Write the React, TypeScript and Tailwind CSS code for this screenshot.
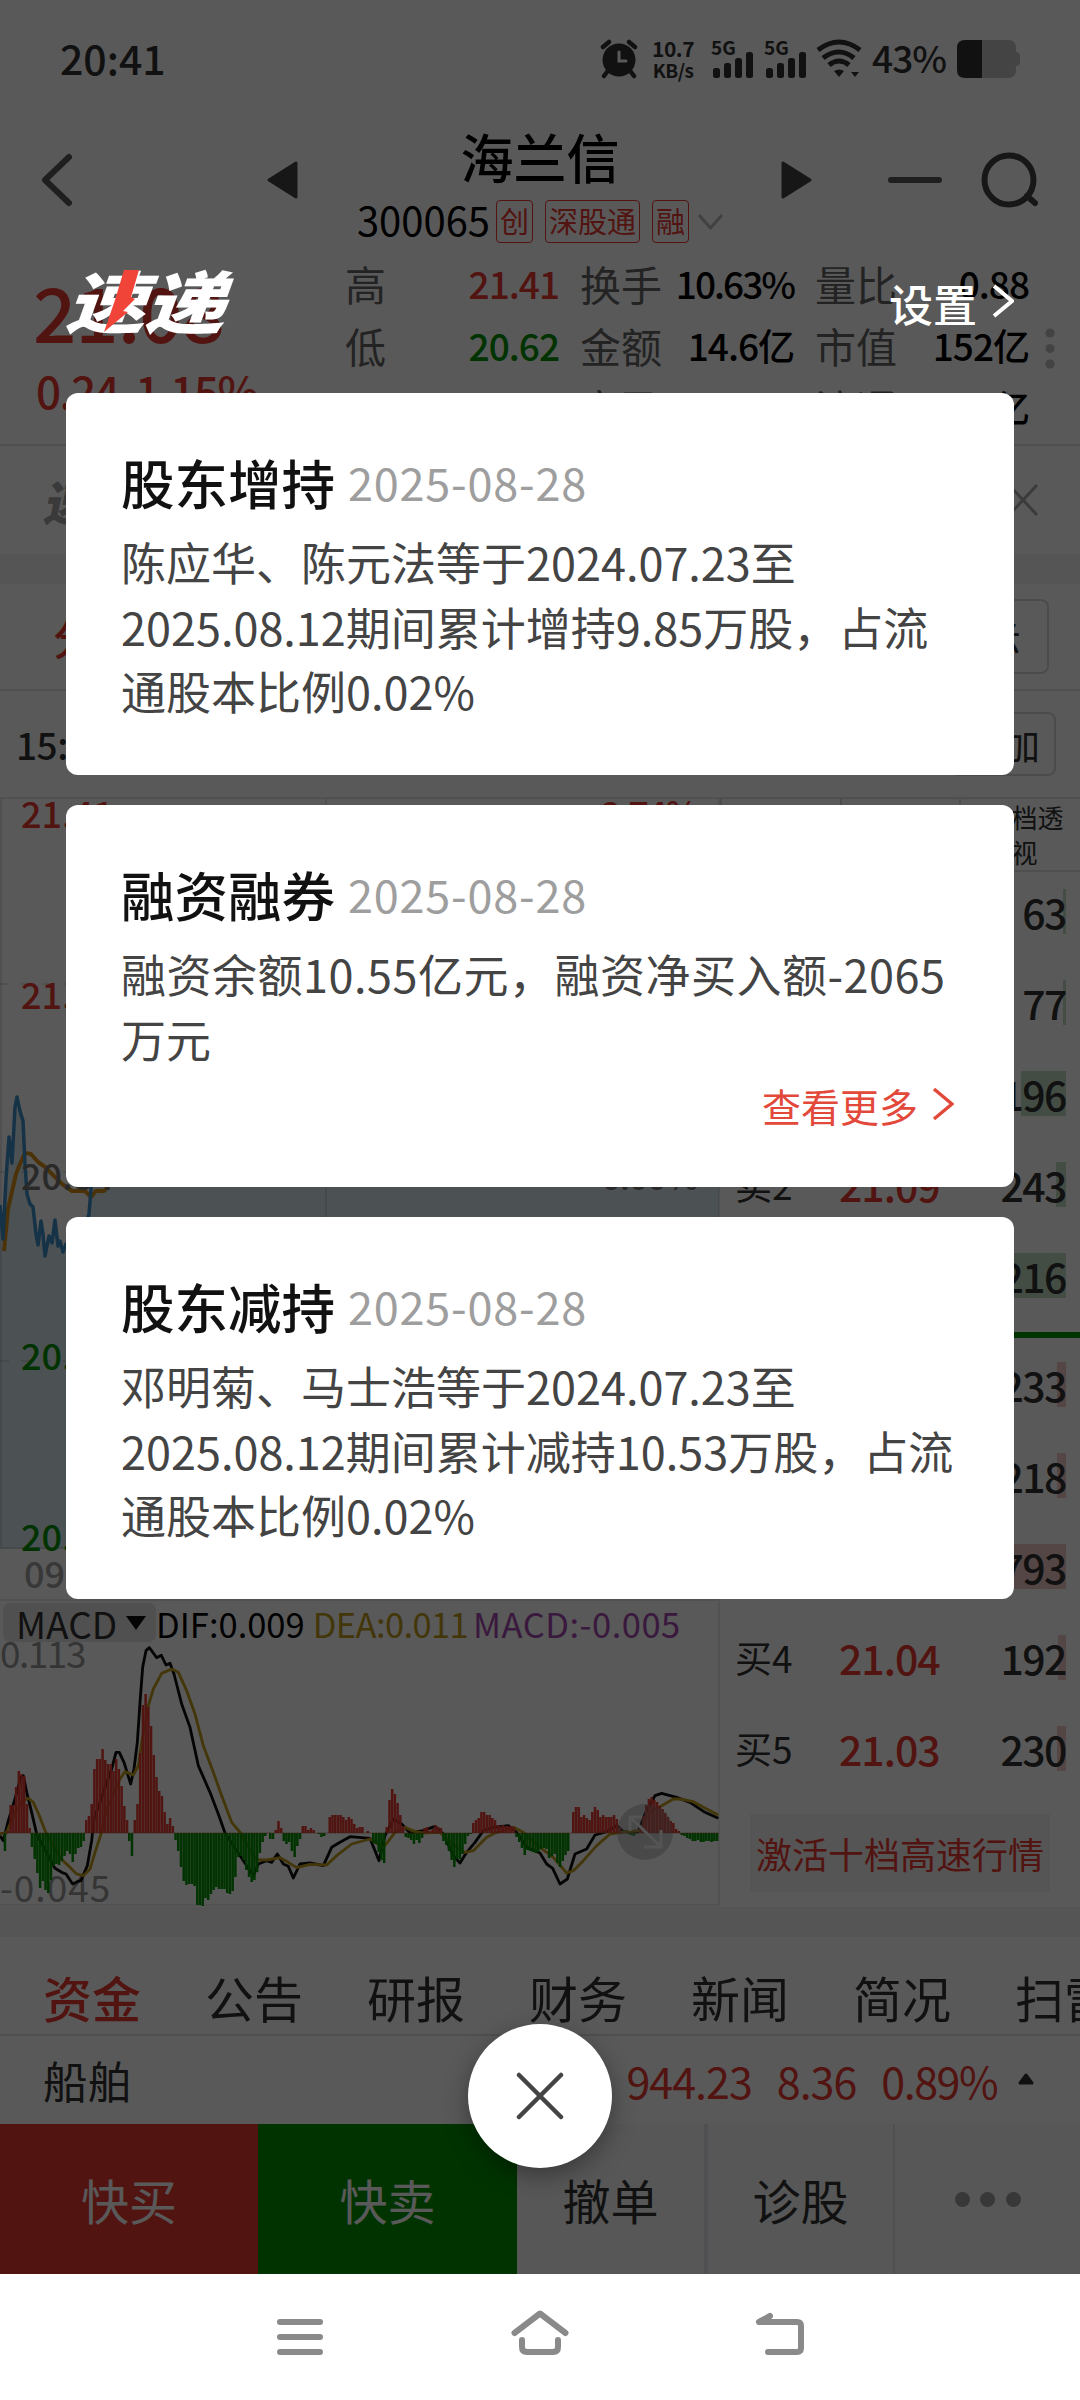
import { clsx } from "clsx";

const TAGS = ["创", "深股通", "融"];

const STATS = [
  [
    { label: "高", value: "21.41", color: "text-[#eb3a33]" },
    { label: "低", value: "20.62", color: "text-[#009200]" },
    { label: "开", value: "20.84", color: "text-black" },
  ],
  [
    { label: "换手", value: "10.63%", color: "text-black" },
    { label: "金额", value: "14.6亿", color: "text-black" },
    { label: "市盈", value: "--", color: "text-black" },
  ],
  [
    { label: "量比", value: "0.88", color: "text-black" },
    { label: "市值", value: "152亿", color: "text-black" },
    { label: "流通", value: "136亿", color: "text-black" },
  ],
];

const ASKS = [
  { label: "卖5", price: "21.12", volume: "63", bar: 3 },
  { label: "卖4", price: "21.11", volume: "77", bar: 3 },
  { label: "卖3", price: "21.10", volume: "196", bar: 45 },
  { label: "卖2", price: "21.09", volume: "243", bar: 10 },
  { label: "卖1", price: "21.08", volume: "216", bar: 76 },
];

const BIDS = [
  { label: "买1", price: "21.07", volume: "233", bar: 9 },
  { label: "买2", price: "21.06", volume: "218", bar: 9 },
  { label: "买3", price: "21.05", volume: "793", bar: 120 },
  { label: "买4", price: "21.04", volume: "192", bar: 8 },
  { label: "买5", price: "21.03", volume: "230", bar: 9 },
];

const TABS = ["资金", "公告", "研报", "财务", "新闻", "简况", "扫雷"];

const NEWS = [
  {
    title: "股东增持",
    date: "2025-08-28",
    lines: ["陈应华、陈元法等于2024.07.23至", "2025.08.12期间累计增持9.85万股，占流", "通股本比例0.02%"],
    more: false,
  },
  {
    title: "融资融券",
    date: "2025-08-28",
    lines: ["融资余额10.55亿元，融资净买入额-2065", "万元"],
    more: true,
  },
  {
    title: "股东减持",
    date: "2025-08-28",
    lines: ["邓明菊、马士浩等于2024.07.23至", "2025.08.12期间累计减持10.53万股，占流", "通股本比例0.02%"],
    more: false,
  },
];

// MACD histogram: [start x, bar heights], positive goes up from the zero line
const MACD_RUNS: [number, number[]][] = [
  [3.7, [-18]],
  [6.7, [2, 28, 28, 46, 62, 59, 57, 29, 5]],
  [30.7, [-14, -26, -40, -55, -48, -57, -60, -47, -33, -31, -32, -28, -23, -18, -21, -29, -21, -15, -14, -8]],
  [85, [13, 17, 29, 64, 74, 74, 84, 73, 69, 69, 62, 74, 64, 47, 27, 13]],
  [128, [-8, -23]],
  [133.5, [13, 29, 80, 128, 139, 126, 107, 78, 56, 42, 37, 21, 9, 15, 7]],
  [174.3, [-7, -18, -34, -48, -52, -51, -51, -53, -72, -72, -74, -65, -67, -61, -57, -54, -56, -56, -56, -60, -61, -58, -44, -24, -23, -27, -37, -44, -49, -47, -39, -20, -9, -3]],
  [269, [-6, -6]],
  [274.5, [3, 12, 5]],
  [282.5, [-8, -11, -9, -18, -24, -13, -6]],
  [301.5, [7, 7, 3, 5, 3]],
  [317.5, [-1, -4, -3]],
  [328.5, [16, 18, 18, 18, 18, 16, 13, 16, 14, 9, 5, 6, 6]],
  [366.5, [2]],
  [372, [-10, -11, -19, -27, -30]],
  [385.5, [6, 33, 44, 39, 30, 18, 7]],
  [404.5, [-4, -5, -7, -11, -7, -10, -5]],
  [423.3, [5, 6, 2, 4, 8, 6, 5]],
  [442.2, [-8, -12, -18, -27, -34, -26, -26, -21, -11, -3, -1]],
  [472, [10, 13, 15, 21, 21, 18, 18, 15, 13, 8, 7, 8, 7, 7, 7, 6]],
  [515.3, [-4, -9, -15, -22, -17, -18, -19, -20, -19, -16, -15, -16, -25, -23, -21, -30, -34, -28, -22, -18]],
  [572, [21, 26, 26, 16, 18, 15, 13, 21, 26, 23, 16, 18, 16, 16, 16, 18, 14, 6]],
  [627, [-1, -2, -3, -1]],
  [639.5, [8, 17, 28, 34, 36, 33, 31, 27, 24, 20, 16, 12, 10, 4, 2]],
  [680.5, [-2, -3, -5, -6, -8, -8, -7, -9, -9, -8, -8, -9, -8, -8]],
];
const BARS = MACD_RUNS.flatMap(([x, hs]) => hs.map((h, i) => ({ x: x + i * 2.72, h })));

const DIF =
  "0,770 10,785 25,725 45,660 62,595 70,590 80,640 95,700 110,765 165,868 185,880 198,885 218,915 232,908 243,905 262,860 275,785 282,720 335,570 348,520 358,520 372,550 392,615 402,570 412,490 420,370 428,265 438,215 448,206 462,225 470,236 484,229 498,258 510,253 522,285 545,375 570,445 595,560 630,640 655,705 675,762 760,890 775,855 800,845 815,850 832,825 850,855 865,862 880,897 900,855 930,852 970,860 995,805 1020,790 1050,773 1110,778 1137,845 1155,770 1180,720 1205,735 1230,762 1270,755 1305,742 1330,765 1360,830 1380,852 1400,820 1425,790 1450,755 1480,745 1525,740 1550,760 1580,805 1620,822 1640,855 1658,868 1680,915 1702,900 1725,825 1760,810 1785,768 1820,758 1850,740 1870,758 1915,758 1935,705 1965,650 1985,643 2030,655 2070,670 2115,700 2155,718";
const DEA =
  "0,765 20,760 45,700 70,665 85,658 100,670 118,710 138,762 185,842 205,860 230,885 250,890 270,870 285,820 303,765 320,690 360,600 375,578 400,588 415,560 425,490 445,380 460,330 485,283 515,270 535,280 560,335 585,405 610,500 640,580 665,650 695,730 722,762 768,842 800,843 840,836 865,850 890,866 930,856 980,858 1010,830 1055,795 1110,780 1150,805 1170,780 1185,760 1215,745 1245,758 1270,762 1320,760 1350,790 1395,820 1420,815 1460,775 1485,762 1540,745 1570,760 1620,805 1660,835 1700,882 1720,875 1750,845 1790,800 1830,765 1880,758 1920,755 1950,700 1980,683 2020,660 2040,660 2080,668 2120,690 2155,708";

const PRICE_LINE =
  "0,408 3,442 6,382 9,340 12,366 15,310 17,300 20,314 23,324 25,367 27,397 30,407 33,410 36,437 38,448 41,424 43,437 45,459 49,439 52,446 55,423 58,449 60,444 63,455 66,447 74,462 82,440 89,417 92,380 110,330 180,300 260,330 350,280 470,300 600,250 719,233";
const AVG_LINE =
  "4,454 8,412 13,390 16,377 20,367 25,356 31,357 38,365 45,370 52,377 62,387 72,394 85,394 91,400 96,394 104,394 111,386 200,360 400,320 719,300";

function StatusBar() {
  return (
    <div className="h-[114px] pl-[60px] pr-[60px] flex items-center justify-between text-[#333]">
      <div className="text-[41px] font-medium leading-none">20:41</div>
      <div className="pt-[4px] flex items-center">
        <svg width="38" height="40" viewBox="0 0 38 40" fill="none" stroke="#333" strokeWidth="4.500" strokeLinecap="round">
          <circle cx="19" cy="21" r="16.500" fill="#333" stroke="none" />
          <path d="M3 8 L9 3 M35 8 L29 3 M7 33 L4 37 M31 33 L34 37" />
          <path d="M19 13 V22 H26" stroke="#fff" strokeWidth="3" />
        </svg>
        <div className="ml-[13px] w-[44px] text-[21px] leading-[21px] font-bold text-center tracking-[-0.5px]">
          10.7
          <br />
          <span className="text-[19px]">KB/s</span>
        </div>
        {[0, 1].map((i) => (
          <svg key={i} width="43" height="40" viewBox="0 0 43 40" className={clsx("overflow-visible", i ? "ml-[10px]" : "ml-[16px]")} fill="#333">
            <text x="0" y="16" fontSize="19" fontWeight="700">5G</text>
            <rect x="2" y="29" width="7" height="10" rx="2.500" />
            <rect x="13" y="24" width="7" height="15" rx="2.500" />
            <rect x="24" y="19" width="7" height="20" rx="2.500" />
            <rect x="35" y="13" width="7" height="26" rx="2.500" />
          </svg>
        ))}
        <svg width="46" height="40" viewBox="0 0 46 40" className="ml-[9px]" fill="none" stroke="#333" strokeWidth="5">
          <path d="M2 11 Q23 -5 44 11 M7 19 Q23 7 38 19 M13 26 Q23 18 33 26" />
          <path d="M23 38 L18 32 Q23 29 28 32 Z M39 38 L35 33 H43 Z" fill="#333" stroke="none" />
        </svg>
        <div className="ml-[10px] mb-[4px] text-[37px] font-medium leading-none tracking-[-1px]">43%</div>
        <svg width="63" height="38" viewBox="0 0 63 38" className="ml-[11px]">
          <path d="M10 0 H51 Q59 0 59 8 V12 Q63 12 63 16 V22 Q63 26 59 26 V30 Q59 38 51 38 H10 Z" fill="#c4c4c4" />
          <path d="M25 0 H8 Q0 0 0 8 V30 Q0 38 8 38 H25 Z" fill="#333" />
        </svg>
      </div>
    </div>
  );
}

function StockHeader() {
  return (
    <div className="h-[136px] pt-[6px] flex items-start">
      <svg width="420" height="120" viewBox="0 0 420 120" fill="none">
        <path d="M69 37 L45 60 L69 83" stroke="#5a5a5a" strokeWidth="6" strokeLinecap="round" strokeLinejoin="round" />
        <path d="M296 43 V77 L269 60 Z" fill="#444" stroke="#444" strokeWidth="3" strokeLinejoin="round" />
      </svg>
      <div className="w-[240px] flex flex-col items-center text-black">
        <div className="mt-[5px] text-[53px] leading-[62px] font-medium">海兰信</div>
        <div className="mt-[11px] flex items-center">
          <span className="mb-[4px] text-[40px] leading-[43px]">300065</span>
          {TAGS.map((t, i) => (
            <span
              key={t}
              className={clsx(
                "h-[43px] px-[3px] border border-[#eb3a33] rounded-[4px] text-[29px] leading-[39px] text-[#eb3a33] whitespace-nowrap",
                i ? "ml-[12px]" : "ml-[6px]",
              )}
            >
              {t}
            </span>
          ))}
          <svg width="25" height="16" viewBox="0 0 25 16" className="ml-[9px] shrink-0" fill="none">
            <path d="M1 1 L12.5 14 L24 1" stroke="#b9b9b9" strokeWidth="3" />
          </svg>
        </div>
      </div>
      <svg width="420" height="120" viewBox="0 0 420 120" fill="none">
        <path d="M123 43 V77 L150 60 Z" fill="#444" stroke="#444" strokeWidth="3" strokeLinejoin="round" />
        <path d="M231 60 H279" stroke="#5a5a5a" strokeWidth="6" strokeLinecap="round" />
        <circle cx="349" cy="60" r="24.500" stroke="#444" strokeWidth="6" />
        <path d="M367 76 L375 83" stroke="#444" strokeWidth="6" strokeLinecap="round" />
      </svg>
    </div>
  );
}

function Quote() {
  return (
    <div className="h-[196px] flex border-b-2 border-[#e2e2e2]">
      <div className="w-[345px] pl-[33px] text-[#eb3a33] font-medium">
        <div className="mt-[20px] text-[76px] leading-[80px] tracking-[-1px]">21.08</div>
        <div className="mt-[15px] pl-[3px] text-[44px] leading-[50px] tracking-[-1.5px]">0.24&nbsp;&nbsp;1.15%</div>
      </div>
      <div className="pt-[2px] flex gap-[21px]">
        {STATS.map((col, i) => (
          <div key={i} className="w-[214px]">
            {col.map((s) => (
              <div key={s.label} className="h-[62px] flex items-center justify-between">
                <span className="text-[41px] leading-none text-[#666]">{s.label}</span>
                <span
                  className={clsx(
                    "text-[37px] leading-none font-medium",
                    s.value.endsWith("%") ? "tracking-[-2px]" : "tracking-[-1px]",
                    s.color,
                  )}
                >
                  {s.value}
                </span>
              </div>
            ))}
          </div>
        ))}
      </div>
      <svg width="10" height="42" viewBox="0 0 10 42" className="ml-[16px] mt-[78px]" fill="#bfbfbf">
        <circle cx="5" cy="5" r="4.600" />
        <circle cx="5" cy="20.500" r="4.600" />
        <circle cx="5" cy="36" r="4.600" />
      </svg>
    </div>
  );
}

function SubBars() {
  return (
    <>
      <div className="h-[108px] px-[42px] flex items-center justify-between">
        <div className="pl-[5px] text-[48px] font-black -skew-x-12 text-[#a5a5a5] leading-none">速递</div>
        <svg width="30" height="32" viewBox="0 0 30 32" fill="none">
          <path d="M1 1 L29 31 M29 1 L1 31" stroke="#aaa" strokeWidth="3" />
        </svg>
      </div>
      <div className="h-[30px] bg-[#f4f4f4]" />
      <div className="h-[107px] pl-[53px] pr-[31px] flex items-center justify-between border-b-2 border-[#e4e4e4]">
        <span className="text-[42px] leading-none font-medium text-[#eb3a33]">分时</span>
        <span className="h-[75px] px-[26px] flex items-center border-2 border-[#d8d8d8] rounded-[8px] text-[38px] leading-none text-[#333]">提示</span>
      </div>
      <div className="h-[106px] pl-[16px] pr-[24px] flex items-center justify-between text-[#333]">
        <span className="text-[37px] font-medium leading-none tracking-[-0.5px]">15:00</span>
        <span className="h-[64px] px-[14px] flex items-center border-2 border-[#d8d8d8] rounded-[8px] text-[37px] leading-none">叠加</span>
      </div>
    </>
  );
}

function PriceChart() {
  return (
    <svg width="720" height="752" viewBox="0 0 720 752" fontSize="36" fontWeight="500" className="overflow-visible">
      <polygon points={`${PRICE_LINE} 719,752 0,752`} fill="#dbe8f0" />
      <g stroke="#000" strokeOpacity="0.100" strokeWidth="2" fill="none">
        <path d="M1 0 V752 M0 1 H719 M326 0 V752 M719 0 V752 M0 751 H719" />
        <path d="M0 187 H719 M0 375 H719 M0 564 H719" strokeDasharray="9 12" />
      </g>
      <polyline points={AVG_LINE} fill="none" stroke="#d88f1c" strokeWidth="4" strokeLinejoin="round" />
      <polyline points={PRICE_LINE} fill="none" stroke="#3c8fcb" strokeWidth="3.500" strokeLinejoin="round" />
      <g fill="#eb3a33">
        <text x="21" y="31">21.41</text>
        <text x="21" y="212">21.12</text>
        <text x="697" y="31" textAnchor="end" letterSpacing="-2">2.74%</text>
      </g>
      <g fill="#777">
        <text x="21" y="393">20.84</text>
        <text x="697" y="393" textAnchor="end" letterSpacing="-2">0.00%</text>
      </g>
      <g fill="#009200">
        <text x="21" y="573">20.55</text>
        <text x="21" y="754">20.27</text>
      </g>
    </svg>
  );
}

function MacdPanel() {
  return (
    <div className="relative h-[307px] border-y-2 border-r-2 border-[#ebebeb]">
      <svg width="719" height="307" viewBox="0 0 719 307" className="absolute left-0 -top-[2px]">
        <g fontSize="37" fill="#999">
          <text x="0" y="69" letterSpacing="-1.500">0.113</text>
          <text x="0" y="303" letterSpacing="1">-0.045</text>
        </g>
        <g transform="scale(0.33333) translate(0 -60)" fill="none" strokeWidth="8.500" strokeLinejoin="round">
          <polyline points={DIF} stroke="#0d0d0d" />
          <polyline points={DEA} stroke="#c09a1c" />
        </g>
        {BARS.map((b) => (
          <rect
            key={b.x}
            x={b.x}
            y={b.h > 0 ? 234 - b.h : 234}
            width="2.500"
            height={Math.abs(b.h)}
            fill={b.h > 0 ? "#e53a33" : "#009200"}
          />
        ))}
        <path d="M0 234 H719" stroke="#a05020" strokeWidth="0.500" />
        <circle cx="645" cy="233" r="28" fill="#8a8a8a" fillOpacity="0.400" />
        <path d="M630 232 V218 H642 M630 218 L661 248 M644 248 H661 V231" fill="none" stroke="#efefef" strokeWidth="3" />
      </svg>
      <div className="relative pt-[2px] pl-[3px] flex items-center text-[34.5px] leading-[38px] whitespace-nowrap">
        <div className="w-[153px] h-[39px] pl-[13px] flex items-center rounded-[7px] bg-[#e6e6e6] text-[37px] text-[#333]">
          MACD
          <svg width="20" height="14" viewBox="0 0 20 14" className="ml-[9px]">
            <path d="M0 0 H20 L10 14 Z" fill="#111" />
          </svg>
        </div>
        <span className="text-black">DIF:0.009</span>
        <span className="ml-[8px] text-[#bf9a1b] tracking-[-0.6px]">DEA:0.011</span>
        <span className="ml-[5px] text-[#a448ae] tracking-[0.5px]">MACD:-0.005</span>
      </div>
    </div>
  );
}

function DepthRow({ row, bar }: { row: (typeof ASKS)[number]; bar: string }) {
  return (
    <div className="relative h-[45px] flex items-center text-[#333]">
      <div className={clsx("absolute right-0 top-0 h-full", bar)} style={{ width: row.bar }} />
      <span className="relative w-[104px] text-[37px] leading-none">{row.label}</span>
      <span className="relative text-[41px] leading-none font-medium text-[#eb3a33] tracking-[-1px]">{row.price}</span>
      <span className="relative ml-auto text-[41px] leading-none font-medium tracking-[-1.5px]">{row.volume}</span>
    </div>
  );
}

function OrderBook() {
  return (
    <div className="w-[360px]">
      <div className="h-[75px] flex border-y-2 border-[#e2e2e2] text-[26px] leading-[35px] text-[#333] text-center">
        <div className="w-[122px] pt-[18px] border-x-2 border-[#dcdcdc]">五档</div>
        <div className="w-[119px] pt-[18px] border-r-2 border-[#dcdcdc]">明细</div>
        <div className="w-[119px] pl-[24px] pr-[16px]">十档透视</div>
      </div>
      <div className="pt-[17px] pb-[34px] pl-[15px] pr-[14px] flex flex-col gap-[46px]">
        {ASKS.map((r) => (
          <DepthRow key={r.label} row={r} bar="bg-[#c0dcc2]" />
        ))}
      </div>
      <div className="h-[6px] bg-[#009200]" />
      <div className="pt-[24px] pl-[15px] pr-[14px] flex flex-col gap-[46px]">
        {BIDS.map((r) => (
          <DepthRow key={r.label} row={r} bar="bg-[#efc9c6]" />
        ))}
      </div>
      <div className="mt-[43px] ml-[30px] w-[300px] h-[78px] flex items-center justify-center bg-[#f4f4f4] text-[36px] text-[#eb3a33]">
        激活十档高速行情
      </div>
    </div>
  );
}

function BottomArea() {
  return (
    <>
      <div className="h-[30px] bg-[#f4f4f4]" />
      <div className="h-[99px] pl-[43px] flex items-center gap-[64px] overflow-hidden whitespace-nowrap border-b-2 border-[#e2e2e2] text-[49px] leading-none text-[#333]">
        {TABS.map((t, i) => (
          <span key={t} className={clsx("pt-[22px]", i === 0 && "font-medium text-[#eb3a33]")}>{t}</span>
        ))}
      </div>
      <div className="h-[88px] pl-[43px] pr-[46px] flex items-center text-[44.5px] leading-none text-[#333]">
        <span>船舶</span>
        <span className="ml-auto flex gap-[25px] text-[43px] text-[#eb3a33] tracking-[-1px]">
          <span>944.23</span>
          <span>8.36</span>
          <span className="tracking-[-1.5px]">0.89%</span>
        </span>
        <svg width="16" height="12" viewBox="0 0 16 12" className="ml-[21px] mb-[2px]">
          <path d="M8 2 L14 10 H2 Z" fill="#333" stroke="#333" strokeWidth="3" strokeLinejoin="round" />
        </svg>
      </div>
      <div className="h-[150px] pb-[2px] flex text-[48px] leading-none text-[#333] bg-[#f9f9f9]">
        <div className="w-[258px] h-[150px] flex items-center justify-center bg-[#eb3a33] text-white">快买</div>
        <div className="w-[259px] h-[150px] flex items-center justify-center bg-[#009200] text-white">快卖</div>
        <div className="w-[191px] h-[150px] flex items-center justify-center border-r-4 border-[#e6e6ee]">撤单</div>
        <div className="w-[187px] h-[150px] flex items-center justify-center border-r-2 border-[#e6e6ee]">诊股</div>
        <div className="h-[150px] flex-1 flex items-center justify-center gap-[10.500px]">
          <i className="size-[15px] rounded-full bg-[#a0a0a0]" />
          <i className="size-[15px] rounded-full bg-[#a0a0a0]" />
          <i className="size-[15px] rounded-full bg-[#a0a0a0]" />
        </div>
      </div>
    </>
  );
}

function ExpressLogo() {
  return (
    <div className="relative w-[170px] h-[64px]">
      <div className="pl-[9px] -mt-[3px] origin-left text-[80px] leading-[64px] font-black text-white whitespace-nowrap -skew-x-[17deg] scale-y-[0.84] tracking-[-1px]">
        速递
      </div>
      <svg width="170" height="64" viewBox="0 0 170 64" className="absolute inset-0">
        <path d="M58 0 H73 L65 27 L69 29 L57 41 L62 42 L38 62 L49 30 Z" fill="#f04438" />
      </svg>
    </div>
  );
}

function Overlay() {
  return (
    <div className="absolute inset-0 px-[66px] bg-black/65 flex flex-col items-center">
      <div className="w-full h-[393px] pt-[270px] flex items-start justify-between">
        <ExpressLogo />
        <div className="pt-[11px] flex items-center text-[44px] leading-none font-medium text-white">
          设置
          <svg width="22" height="34" viewBox="0 0 22 34" className="ml-[15px] mb-[4px]" fill="none">
            <path d="M2 2 L20 17 L2 32" stroke="#fff" strokeWidth="4" />
          </svg>
        </div>
      </div>
      <div className="flex flex-col gap-[30px]">
        {NEWS.map((n) => (
          <div key={n.title} className="w-[948px] h-[382px] pl-[55px] pt-[57px] rounded-[12px] bg-white">
            <div className="flex items-center leading-[64px]">
              <span className="text-[53.5px] font-medium text-[#111]">{n.title}</span>
              <span className="ml-[13px] text-[45px] text-[#9e9e9e] tracking-[0.8px]">{n.date}</span>
            </div>
            <div className="mt-[16px] text-[45px] leading-[64.5px] text-[#444] whitespace-nowrap">
              {n.lines.map((l) => (
                <div key={l} className={clsx(l.includes("-") && "tracking-[0.5px]")}>{l}</div>
              ))}
            </div>
            {n.more && (
              <div className="mt-[7px] pr-[60px] flex items-center justify-end text-[39px] leading-[54px] text-[#e2493a]">
                查看更多
                <svg width="22" height="34" viewBox="0 0 22 34" className="ml-[14px] mb-[2px]" fill="none">
                  <path d="M2 2 L20 17 L2 32" stroke="#e2493a" strokeWidth="3.500" />
                </svg>
              </div>
            )}
          </div>
        ))}
      </div>
      <button className="mt-[425px] size-[144px] shrink-0 rounded-full bg-white shadow-[0_8px_24px_rgba(0,0,0,0.35)] flex items-center justify-center">
        <svg width="48" height="48" viewBox="0 0 48 48" fill="none">
          <path d="M3 3 L45 45 M45 3 L3 45" stroke="#444" strokeWidth="4.500" strokeLinecap="round" />
        </svg>
      </button>
    </div>
  );
}

function SystemNav() {
  return (
    <div className="h-[126px] flex items-center justify-center bg-white">
      <svg width="540" height="60" viewBox="0 0 540 60" fill="none" stroke="#8a8a8a" strokeWidth="6" strokeLinecap="round" strokeLinejoin="round">
        <path d="M10 15 H50 M10 30 H50 M10 45 H50" />
        <path d="M244.500 26 L270 6.500 L295.500 26 M252 33 V40 Q252 45 257 45 H283 Q288 45 288 40 V33" />
        <path d="M500 9 L489 15 H527 Q531 15 531 19 V41 Q531 45 527 45 H498" />
      </svg>
    </div>
  );
}

export default function App() {
  return (
    <div className="w-[1080px] h-[2400px] overflow-hidden bg-white font-['Noto_Sans_CJK_SC',sans-serif]">
      <div className="relative h-[2274px] overflow-hidden bg-white">
        <StatusBar />
        <StockHeader />
        <Quote />
        <div className="h-[351px]">
          <SubBars />
        </div>
        <div className="h-[1110px] flex">
          <div className="w-[720px]">
            <PriceChart />
            <div className="h-[50px] pl-[24px] pt-[3px] text-[36px] leading-[40px] font-medium text-[#a0a0a0]">09:30</div>
            <MacdPanel />
          </div>
          <OrderBook />
        </div>
        <BottomArea />
        <Overlay />
      </div>
      <SystemNav />
    </div>
  );
}
